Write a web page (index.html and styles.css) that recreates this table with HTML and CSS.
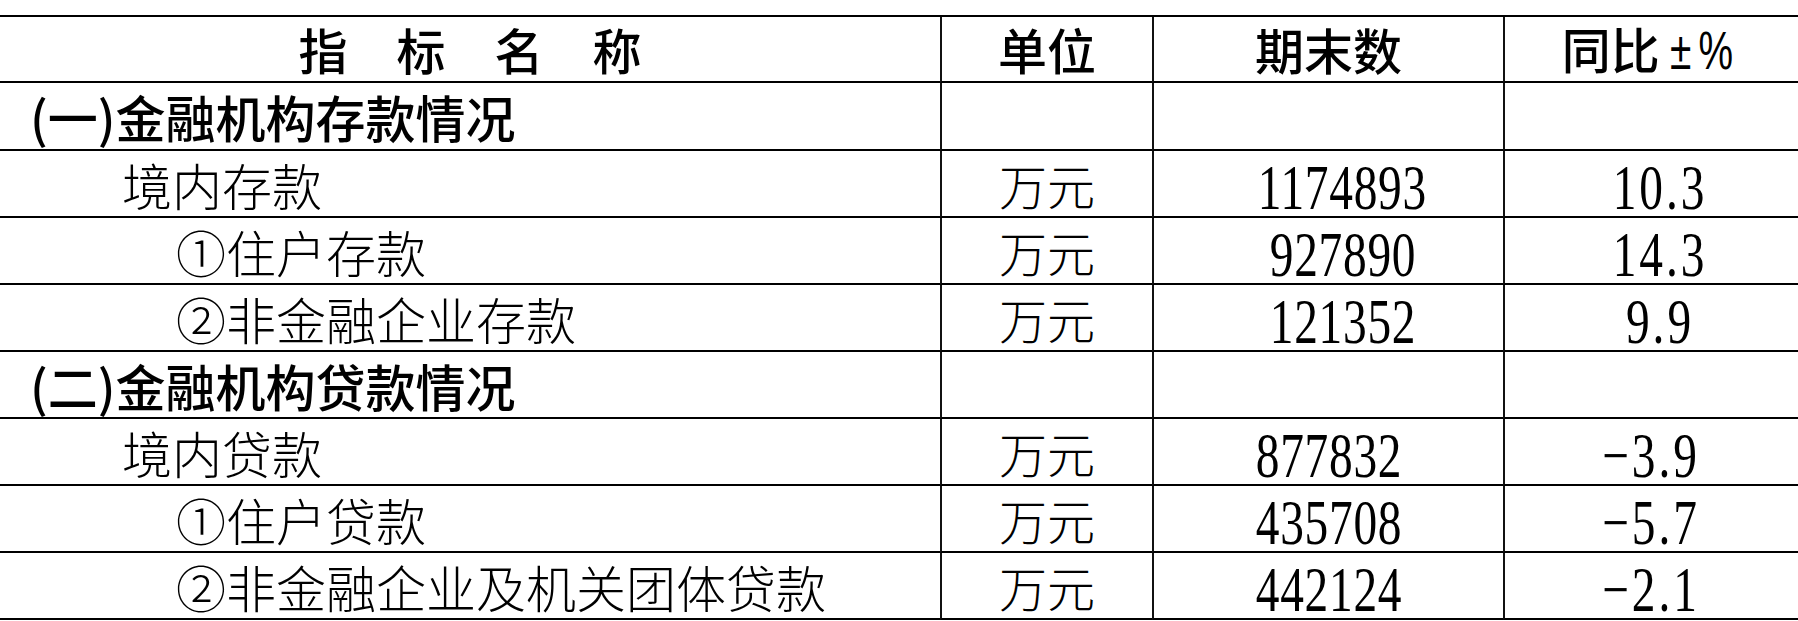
FILE: index.html
```html
<!DOCTYPE html>
<html lang="zh-CN">
<head>
<meta charset="utf-8">
<title>金融机构存贷款情况</title>
<link rel="stylesheet" href="styles.css">
</head>
<body>
<table class="sheet">
  <colgroup>
    <col class="c-name">
    <col class="c-unit">
    <col class="c-end">
    <col class="c-yoy">
  </colgroup>
  <thead>
    <tr class="head">
      <th class="name-h">指　标　名　称</th>
      <th>单位</th>
      <th>期末数</th>
      <th class="yoy-h">同比<span class="pm">±%</span></th>
    </tr>
  </thead>
  <tbody>
    <tr class="sec first">
      <td class="name lv0">(一)金融机构存款情况</td>
      <td></td><td></td><td></td>
    </tr>
    <tr class="dep">
      <td class="name lv1">境内存款</td>
      <td class="unit">万元</td>
      <td class="val"><span class="num">1174893</span></td>
      <td class="pct"><span class="num">10.3</span></td>
    </tr>
    <tr class="dep">
      <td class="name lv2">①住户存款</td>
      <td class="unit">万元</td>
      <td class="val"><span class="num">927890</span></td>
      <td class="pct"><span class="num">14.3</span></td>
    </tr>
    <tr class="dep">
      <td class="name lv2">②非金融企业存款</td>
      <td class="unit">万元</td>
      <td class="val"><span class="num">121352</span></td>
      <td class="pct"><span class="num">9.9</span></td>
    </tr>
    <tr class="sec">
      <td class="name lv0">(二)金融机构贷款情况</td>
      <td></td><td></td><td></td>
    </tr>
    <tr>
      <td class="name lv1">境内贷款</td>
      <td class="unit">万元</td>
      <td class="val"><span class="num">877832</span></td>
      <td class="pct"><span class="num">−3.9</span></td>
    </tr>
    <tr>
      <td class="name lv2">①住户贷款</td>
      <td class="unit">万元</td>
      <td class="val"><span class="num">435708</span></td>
      <td class="pct"><span class="num">−5.7</span></td>
    </tr>
    <tr>
      <td class="name lv2">②非金融企业及机关团体贷款</td>
      <td class="unit">万元</td>
      <td class="val"><span class="num">442124</span></td>
      <td class="pct"><span class="num">−2.1</span></td>
    </tr>
  </tbody>
</table>
</body>
</html>
```

FILE: styles.css
```css
html, body {
  margin: 0;
  padding: 0;
  background: #fff;
}

body {
  color: #000;
  font-family: "Noto Sans CJK SC", "Noto Sans", sans-serif;
}

.sheet {
  margin-top: 15px;
  width: 1798px;
  table-layout: fixed;
  border-collapse: separate;
  border-spacing: 0;
  border-top: 2px solid #000;
}

.c-name { width: 940px; }
.c-unit { width: 212px; }
.c-end  { width: 351px; }
.c-yoy  { width: 295px; }

.sheet th,
.sheet td {
  box-sizing: border-box;
  height: 67px;
  padding: 0;
  border-bottom: 2px solid #000;
  vertical-align: middle;
  text-align: center;
  white-space: nowrap;
  overflow: visible;
  line-height: 50px;
}

.sheet th + th,
.sheet td + td {
  border-left: 2px solid #111;
}

.sheet .head th {
  height: 66px;
  font-size: 49px;
  font-weight: 500;
}

.sheet .head .yoy-h {
  padding-left: 26px;
}

.pm {
  display: inline-block;
  font-family: "Liberation Sans", sans-serif;
  font-size: 54px;
  font-weight: 400;
  letter-spacing: 10px;
  margin-left: 10px;
  transform: scaleX(0.72);
  transform-origin: left center;
}

.sheet .sec.first td {
  height: 68px;
}

.sheet .name {
  text-align: left;
  font-size: 50px;
  font-weight: 300;
}

.sheet .lv0 {
  padding-left: 30px;
  font-weight: 500;
}

.sheet .lv1 { padding-left: 122px; }
.sheet .lv2 { padding-left: 176px; }

.sheet .unit {
  font-size: 48px;
  font-weight: 300;
}

.num {
  display: inline-block;
  font-family: "Liberation Serif", "Times New Roman", serif;
  font-size: 64px;
  line-height: 50px;
  letter-spacing: 1px;
  transform: scaleX(0.74);
  vertical-align: middle;
  position: relative;
  top: 3px;
}

.pct .num {
  letter-spacing: 4px;
}

.sheet .dep .val { padding-left: 28px; }
.sheet .dep .pct { padding-left: 16px; }
```
